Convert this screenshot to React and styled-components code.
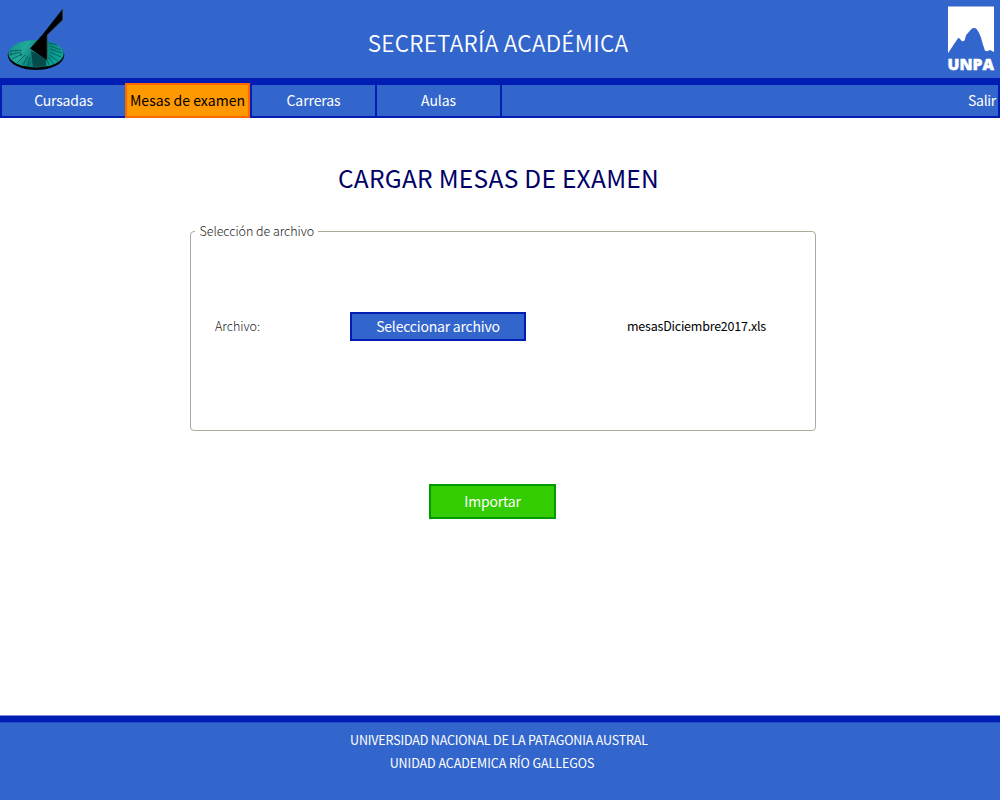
import React from "react";
import styled, { createGlobalStyle } from "styled-components";

const GlobalStyle = createGlobalStyle`
  * { box-sizing: border-box; }
  body { margin: 0; background: #fff; font-family: "Noto Sans CJK SC", "Open Sans", sans-serif; }
`;

const Page = styled.div`
  height: 800px;
  display: flex;
  flex-direction: column;
`;

const Header = styled.header`
  height: 83px;
  flex: none;
  display: grid;
  grid-template-columns: 80px 1fr 80px;
  background: #3366cc;
  border-bottom: 5px solid #001eb4;
`;

const Text = styled.span`
  display: block;
  white-space: nowrap;
  font-size: ${(p) => p.$size}px;
  line-height: 24px;
  font-weight: ${(p) => p.$weight || 400};
  letter-spacing: ${(p) => p.$track || 0}px;
  color: ${(p) => p.$color || "#fff"};
`;

const HeaderTitle = styled.div`
  display: flex;
  justify-content: center;
  padding: 30px 4px 0 0;
`;

const Brand = styled.div`
  display: flex;
  justify-content: ${(p) => (p.$end ? "flex-end" : "flex-start")};
`;

const Nav = styled.nav`
  height: 35px;
  flex: none;
  display: grid;
  grid-template-columns: repeat(4, 125px) 1fr;
`;

const Tab = styled.a`
  display: flex;
  align-items: center;
  justify-content: ${(p) => (p.$end ? "flex-end" : "center")};
  padding: 0 ${(p) => (p.$end ? 2 : 0)}px 1px 0;
  background: ${(p) => (p.$active ? "#ff9900" : "#3366cc")};
  border: 2px solid ${(p) => (p.$active ? "#ff6600" : "#001eb4")};
  border-right-width: ${(p) => (p.$active || p.$end ? 2 : 0)}px;
`;

const Main = styled.main`
  flex: 1;
  display: flex;
  flex-direction: column;
  align-items: center;
`;

const Heading = styled.h1`
  margin: 48px 3px 0 0;
  height: 24px;
`;

const FileGroup = styled.fieldset`
  width: 626px;
  height: 207px;
  margin: 34px 0 0 6px;
  padding: 0;
  border: 1px solid #aaaa99;
  border-radius: 4px;
`;

const Legend = styled.legend`
  height: 14px;
  margin-left: 4px;
  padding: 0 4px 0 4.5px;
  display: flex;
  align-items: center;
`;

const FileRow = styled.div`
  display: grid;
  grid-template-columns: 135px 176px 1fr;
  align-items: center;
  height: 29px;
  margin: 74px 0 0 24px;
`;

const RowText = styled.div`
  padding: 0 0 2px ${(p) => p.$inset || 0}px;
`;

const Button = styled.button`
  width: ${(p) => p.$w}px;
  height: ${(p) => p.$h}px;
  padding: 0 0 1px;
  font-family: inherit;
  display: flex;
  align-items: center;
  justify-content: center;
  background: ${(p) => (p.$go ? "#33cc00" : "#3366cc")};
  border: 2px solid ${(p) => (p.$go ? "#009900" : "#001eb4")};
`;

const Actions = styled.div`
  margin: 53px 15px 0 0;
`;

const Footer = styled.footer`
  height: 85px;
  flex: none;
  display: flex;
  flex-direction: column;
  align-items: center;
  background: linear-gradient(#7f90d8 0 1px, #001eb4 1px 7px, #2050c4 7px 8px, #3366cc 8px);
  padding: 13px 2px 0 0;
`;

const FooterLine = styled.div`
  height: 23px;
  margin-right: ${(p) => p.$shift || 0}px;
`;

const Sundial = () => (
  <svg width="80" height="78" viewBox="0 0 80 78">
    <defs>
      <linearGradient id="dial" x1="0" y1="0" x2="1" y2="0.3">
        <stop offset="0" stopColor="#088c84" />
        <stop offset="0.35" stopColor="#22aa9c" />
        <stop offset="0.6" stopColor="#087c76" />
        <stop offset="1" stopColor="#0ba398" />
      </linearGradient>
    </defs>
    <ellipse cx="36" cy="55.3" rx="28.2" ry="14.7" fill="#050808" />
    <ellipse cx="36" cy="53.7" rx="27.7" ry="13.7" fill="url(#dial)" />
    <path d="M31 51 L33 67 L46 66.5 L46 58Z" fill="#064b4c" />
    <g stroke="#044a4a" strokeWidth="0.7" fill="none">
      <path d="M10 51 22 50M9 55 21 52M12 59 22 54M17 63 25 55M23 65 28 56M28 66 30 57M11 51v4M16 50v2M21 53v3" />
      <path d="M47 60 49 65M48 57 54 64M49 55 58 61M50 52 61 57M50 49 62 53M50 46 61 50M49 43 57 45" />
    </g>
    <path d="M62.5 9 V20 L47 35 V60 L30 48.5 L43 34Z" fill="#000" />
    <path d="M62.5 9 V20 L47 35 V59" fill="none" stroke="#343834" strokeWidth="0.8" />
  </svg>
);

const LogoWord = styled.text`
  font: 900 16.5px "Open Sans", sans-serif;
`;

const Unpa = () => (
  <svg width="60" height="78" viewBox="0 0 60 78">
    <rect x="8" y="6.5" width="46" height="47" fill="#fff" />
    <path
      d="M8 53.3 L17.6 38.8 Q18.8 37.2 20 39 L22 41.2 Q24.8 42 25.2 38 L26.2 35 L31 29.6 Q34 26.8 36.8 29.3 Q39.2 32.5 41 37.5 L42.6 43.5 L45 50.8 L47 51.3 L50 50 L54 52 V54 H8Z"
      fill="#3366cc"
    />
    <LogoWord x="7.5" y="70.3" fill="#fff" stroke="#fff" strokeWidth="0.5" textLength="46.5" lengthAdjust="spacingAndGlyphs">UNPA</LogoWord>
  </svg>
);

export default function App() {
  return (
    <>
      <GlobalStyle />
      <Page>
        <Header>
          <Brand><Sundial /></Brand>
          <HeaderTitle><Text $size={22.5} $weight={350} $track={0.28}>SECRETARÍA ACADÉMICA</Text></HeaderTitle>
          <Brand $end><Unpa /></Brand>
        </Header>
        <Nav>
          <Tab><Text $size={14} $track={-0.2}>Cursadas</Text></Tab>
          <Tab $active><Text $size={14} $track={0.05} $color="#000">Mesas de examen</Text></Tab>
          <Tab><Text $size={14} $track={-0.1}>Carreras</Text></Tab>
          <Tab><Text $size={14} $track={-0.1}>Aulas</Text></Tab>
          <Tab $end><Text $size={14} $track={-0.3}>Salir</Text></Tab>
        </Nav>
        <Main>
          <Heading><Text $size={24.5} $track={0.28} $color="#000066">CARGAR MESAS DE EXAMEN</Text></Heading>
          <FileGroup>
            <Legend><Text $size={12.5} $weight={300} $track={-0.05} $color="#222">Selección de archivo</Text></Legend>
            <FileRow>
              <RowText><Text $size={12.5} $weight={300} $color="#222">Archivo:</Text></RowText>
              <Button $w={176} $h={29}><Text $size={14} $track={-0.2}>Seleccionar archivo</Text></Button>
              <RowText $inset={101}><Text $size={12.5} $track={-0.22} $color="#000">mesasDiciembre2017.xls</Text></RowText>
            </FileRow>
          </FileGroup>
          <Actions>
            <Button $go $w={127} $h={35}><Text $size={14} $track={-0.2}>Importar</Text></Button>
          </Actions>
        </Main>
        <Footer>
          <FooterLine><Text $size={12.5} $track={-0.16}>UNIVERSIDAD NACIONAL DE LA PATAGONIA AUSTRAL</Text></FooterLine>
          <FooterLine $shift={14}><Text $size={12.5} $track={-0.06}>UNIDAD ACADEMICA RÍO GALLEGOS</Text></FooterLine>
        </Footer>
      </Page>
    </>
  );
}
